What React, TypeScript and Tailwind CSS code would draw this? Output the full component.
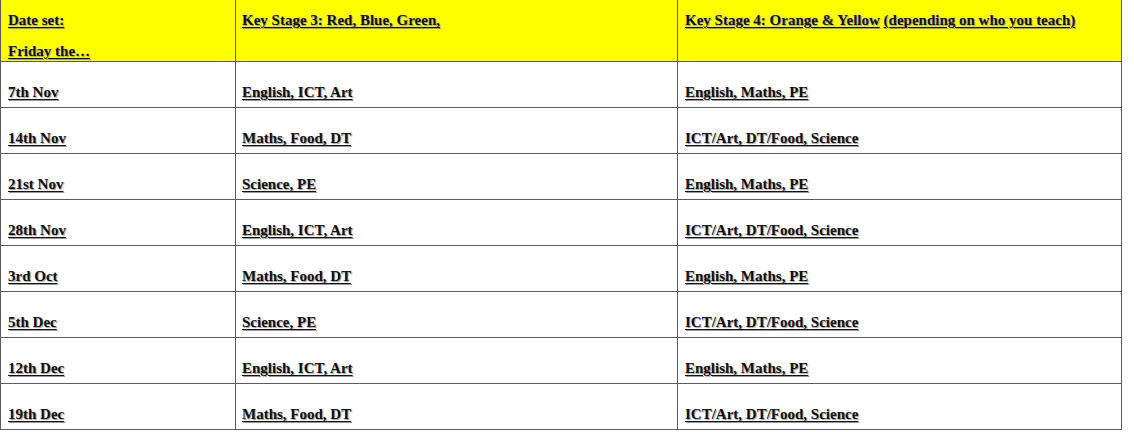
import React from "react";

const rows: [string, string, string][] = [
  ["7th Nov", "English, ICT, Art", "English, Maths, PE"],
  ["14th Nov", "Maths, Food, DT", "ICT/Art, DT/Food, Science"],
  ["21st Nov", "Science, PE", "English, Maths, PE"],
  ["28th Nov", "English, ICT, Art", "ICT/Art, DT/Food, Science"],
  ["3rd Oct", "Maths, Food, DT", "English, Maths, PE"],
  ["5th Dec", "Science, PE", "ICT/Art, DT/Food, Science"],
  ["12th Dec", "English, ICT, Art", "English, Maths, PE"],
  ["19th Dec", "Maths, Food, DT", "ICT/Art, DT/Food, Science"],
];

const T = ({ children }: { children: React.ReactNode }) => (
  <span className="underline decoration-1 underline-offset-[2px] [text-shadow:1px_1px_1px_#9a9a9a]">{children}</span>
);

export default function App() {
  return (
    <div className="bg-white min-h-[432px] font-['Liberation_Serif',serif] font-bold text-[15px] leading-[16px] text-[#111]">
      <div className="grid grid-cols-[236px_442px_444px] w-[1122px]">
        <div className="bg-[#ffff00] h-[62px] border-l border-r border-b border-[#5c5c5c] pl-[7px] pt-[12px]">
          <div><T>Date set:</T></div>
          <div className="mt-[15px]"><T>Friday the…</T></div>
        </div>
        <div className="bg-[#ffff00] h-[62px] border-r border-b border-[#5c5c5c] pl-[6px] pt-[12px]">
          <T>Key Stage 3: Red, Blue, Green,</T>
        </div>
        <div className="bg-[#ffff00] h-[62px] border-r border-b border-[#5c5c5c] pl-[7px] pt-[12px]">
          <T>Key Stage 4: Orange &amp; Yellow</T> <T>(depending on who you teach)</T>
        </div>
        {rows.map(([a, b, c], i) => (
          <React.Fragment key={i}>
            <div className="h-[46px] border-l border-r border-b border-[#5c5c5c] pl-[7px] pt-[22px]">
              <T>{a}</T>
            </div>
            <div className="h-[46px] border-r border-b border-[#5c5c5c] pl-[6px] pt-[22px]">
              <T>{b}</T>
            </div>
            <div className="h-[46px] border-r border-b border-[#5c5c5c] pl-[7px] pt-[22px]">
              <T>{c}</T>
            </div>
          </React.Fragment>
        ))}
      </div>
    </div>
  );
}
